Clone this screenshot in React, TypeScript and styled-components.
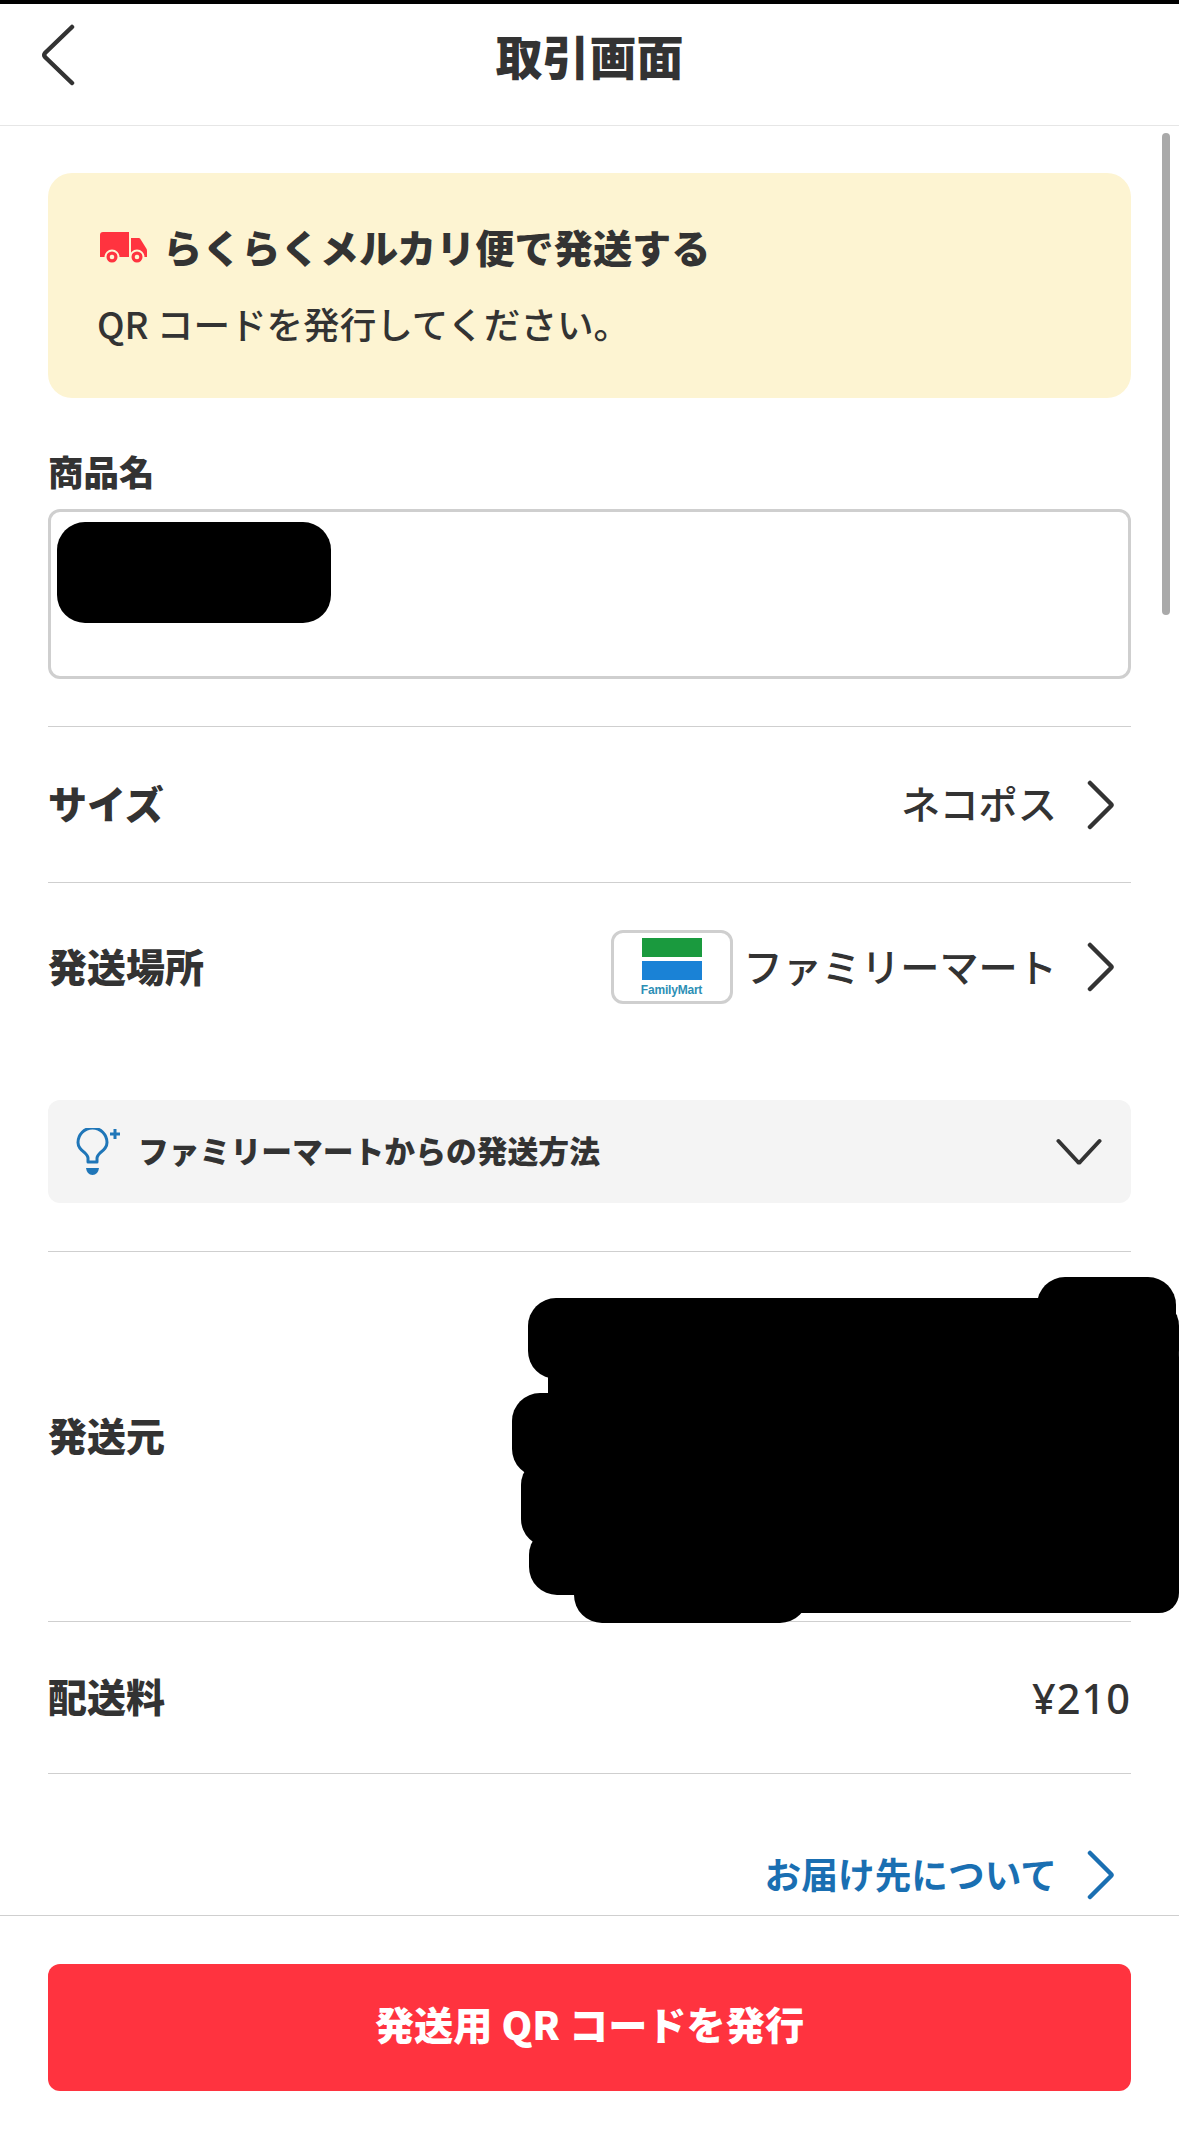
import React from "react";
import styled, { createGlobalStyle } from "styled-components";

const Global = createGlobalStyle`
  html, body { margin: 0; padding: 0; background: #fff; }
  * { box-sizing: border-box; }
  body { font-family: "Noto Sans CJK JP", "Noto Sans", sans-serif; color: #333; }
`;

const Page = styled.div`
  position: relative;
  width: 1179px;
  height: 2132px;
  display: flex;
  flex-direction: column;
  overflow: hidden;
  background: #fff;
  border-top: 4px solid #000;
`;

const Header = styled.header`
  height: 122px;
  flex: none;
  display: grid;
  grid-template-columns: 1fr auto 1fr;
  align-items: center;
  padding: 0 41px 20px 41px;
  border-bottom: 1px solid #e6e6e6;
`;

const Title = styled.h1`
  margin: 0;
  font-size: 47px;
  line-height: 60px;
  font-weight: 900;
  color: #333;
`;

const Body = styled.main`
  flex: 1;
  padding: 47px 48px 0 48px;
  display: flex;
  flex-direction: column;
`;

const Banner = styled.section`
  height: 225px;
  flex: none;
  border-radius: 24px;
  background: #fdf4d2;
  padding: 48px 48px 0 49px;
  display: flex;
  flex-direction: column;
  gap: 28px;
`;

const BannerHead = styled.div`
  display: flex;
  align-items: center;
  gap: 16px;
  height: 50px;
  font-size: 39.2px;
  font-weight: 900;
  line-height: 50px;
`;

const TruckSvg = styled.svg`
  flex: none;
  margin: 4px 0 0 3px;
`;

const BannerText = styled.div`
  font-size: 36.6px;
  line-height: 50px;
  font-weight: 500;
  color: #333;
`;

const FieldLabel = styled.div`
  margin-top: 53px;
  font-size: 35.5px;
  line-height: 40px;
  font-weight: 900;
`;

const NameBox = styled.div`
  margin-top: 18px;
  height: 170px;
  flex: none;
  border: 3px solid #cfcfcf;
  border-radius: 12px;
  padding: 10px 6px;
`;

const NameMask = styled.div`
  width: 274px;
  height: 101px;
  border-radius: 28px;
  background: #000;
`;

const Divider = styled.hr<{ $top?: number }>`
  flex: none;
  width: 100%;
  height: 1px;
  border: 0;
  margin: ${(p) => p.$top ?? 0}px 0 0 0;
  background: #cfcfcf;
`;

const Row = styled.div<{ $height: number }>`
  position: relative;
  height: ${(p) => p.$height}px;
  flex: none;
  display: flex;
  align-items: center;
  justify-content: space-between;
`;

const RowLabel = styled.span`
  font-size: 39px;
  line-height: 50px;
  font-weight: 900;
  padding-bottom: 5px;
`;

const RowValue = styled.span`
  display: flex;
  align-items: center;
`;

const ValueText = styled.span`
  font-size: 39.2px;
  line-height: 50px;
  font-weight: 500;
  padding-bottom: 5px;
`;

const Price = styled.span`
  font-family: "Noto Sans", sans-serif;
  font-size: 41.5px;
  font-weight: 500;
  line-height: 50px;
  letter-spacing: 1px;
`;

const ChevronSlot = styled.span`
  display: flex;
  margin: 0 16px 0 30px;
`;

const LogoBox = styled.span`
  width: 122px;
  height: 74px;
  margin-right: 11px;
  border: 3px solid #cfcfcf;
  border-radius: 12px;
  display: flex;
  flex-direction: column;
  align-items: center;
  padding-top: 5px;
  background: #fff;
`;

const LogoBand = styled.span<{ $color: string; $gap?: number }>`
  width: 60px;
  height: 19px;
  flex: none;
  margin-top: ${(p) => p.$gap ?? 0}px;
  background: ${(p) => p.$color};
`;

const LogoWord = styled.span`
  margin-top: 2px;
  font-family: "Liberation Sans", sans-serif;
  font-size: 12px;
  line-height: 16px;
  font-weight: 700;
  color: #2d8fb5;
  letter-spacing: -0.2px;
`;

const PlaceSection = styled.div`
  height: 368px;
  flex: none;
  display: flex;
  flex-direction: column;
`;

const Accordion = styled.div`
  margin-top: 49px;
  height: 103px;
  flex: none;
  border-radius: 12px;
  background: #f4f4f4;
  display: flex;
  align-items: center;
  padding: 0 29px 0 28px;
`;

const AccordionText = styled.span`
  flex: 1;
  margin-left: 16px;
  font-size: 30.8px;
  line-height: 40px;
  font-weight: 900;
  padding-bottom: 4px;
`;

const LinkRow = styled.div`
  height: 140px;
  flex: none;
  display: flex;
  align-items: center;
  justify-content: flex-end;
  padding-top: 62px;
  color: #1a6fb2;
`;

const LinkText = styled.span`
  font-size: 36.7px;
  font-weight: 700;
  line-height: 50px;
  padding-bottom: 4px;
`;

const Footer = styled.footer`
  height: 217px;
  flex: none;
  border-top: 1px solid #cfcfcf;
  padding: 48px 48px 0 48px;
`;

const PrimaryButton = styled.button`
  width: 100%;
  height: 127px;
  border: 0;
  border-radius: 12px;
  padding: 0 0 9px 0;
  background: #ff333f;
  color: #fff;
  font-family: inherit;
  font-size: 39.2px;
  font-weight: 900;
  display: flex;
  align-items: center;
  justify-content: center;
`;

const ScrollThumb = styled.div`
  position: absolute;
  top: 129px;
  right: 9px;
  width: 8px;
  height: 482px;
  border-radius: 4px;
  background: #a9a9a9;
`;

const AddressMask = styled.svg`
  position: absolute;
  left: 464px;
  top: 25px;
  overflow: visible;
`;

const BackIcon = () => (
  <svg width="34" height="62" viewBox="0 0 34 62" fill="none">
    <path d="M31 3 L4 29 Q2.500 31 4 33 L31 59" stroke="#333" strokeWidth="4.500" strokeLinecap="round" strokeLinejoin="round" />
  </svg>
);

const Chevron = ({ color = "#333" }: { color?: string }) => (
  <svg width="28" height="50" viewBox="0 0 28 50" fill="none">
    <path d="M3 3 L24 24 Q25 25 24 26 L3 47" stroke={color} strokeWidth="4.500" strokeLinecap="round" strokeLinejoin="round" />
  </svg>
);

const ChevronDown = () => (
  <svg width="46" height="28" viewBox="0 0 46 28" fill="none">
    <path d="M2.500 3 L22 24 Q23 25 24 24 L43.500 3" stroke="#333" strokeWidth="4" strokeLinecap="round" strokeLinejoin="round" />
  </svg>
);

const Truck = () => (
  <TruckSvg width="47" height="32" viewBox="0 0 47 32" fill="none">
    <path d="M0 3 Q0 0 3 0 H29 V25 H0 Z" fill="#ff333f" />
    <path d="M31 6 H39 Q40 6 41 8 L46 16 Q47 17 47 19 V25 H31 Z" fill="#ff333f" />
    <circle cx="12" cy="25" r="6.500" fill="#ff333f" stroke="#fdf4d2" strokeWidth="2" />
    <circle cx="12" cy="25" r="2.300" fill="#fdf4d2" />
    <circle cx="37" cy="25" r="6.500" fill="#ff333f" stroke="#fdf4d2" strokeWidth="2" />
    <circle cx="37" cy="25" r="2.300" fill="#fdf4d2" />
  </TruckSvg>
);

const Bulb = () => (
  <svg width="46" height="48" viewBox="0 0 46 48" fill="none">
    <path
      d="M12 34 V30 Q12 28 9 25 Q2 20 2 14.500 A14.500 14.500 0 0 1 31 14.500 Q31 20 24 25 Q21 28 21 30 V34 Z"
      stroke="#1f76b8"
      strokeWidth="3"
      strokeLinejoin="round"
    />
    <path d="M10 40 H23 Q22 47 16.500 47 Q11 47 10 40 Z" fill="#1f76b8" />
    <path d="M39 1 V11 M34 6 H44" stroke="#1f76b8" strokeWidth="3" />
  </svg>
);

export default function App() {
  return (
    <>
      <Global />
      <Page>
        <Header>
          <BackIcon />
          <Title>取引画面</Title>
          <span />
        </Header>
        <Body>
          <Banner>
            <BannerHead>
              <Truck />
              らくらくメルカリ便で発送する
            </BannerHead>
            <BannerText>QR コードを発行してください。</BannerText>
          </Banner>
          <FieldLabel>商品名</FieldLabel>
          <NameBox>
            <NameMask />
          </NameBox>
          <Divider $top={47} />
          <Row $height={155}>
            <RowLabel>サイズ</RowLabel>
            <RowValue>
              <ValueText>ネコポス</ValueText>
              <ChevronSlot>
                <Chevron />
              </ChevronSlot>
            </RowValue>
          </Row>
          <Divider />
          <PlaceSection>
            <Row $height={168}>
              <RowLabel>発送場所</RowLabel>
              <RowValue>
                <LogoBox>
                  <LogoBand $color="#1a9a3e" />
                  <LogoBand $color="#1a82d6" $gap={4} />
                  <LogoWord>FamilyMart</LogoWord>
                </LogoBox>
                <ValueText>ファミリーマート</ValueText>
                <ChevronSlot>
                  <Chevron />
                </ChevronSlot>
              </RowValue>
            </Row>
            <Accordion>
              <Bulb />
              <AccordionText>ファミリーマートからの発送方法</AccordionText>
              <ChevronDown />
            </Accordion>
          </PlaceSection>
          <Divider />
          <Row $height={369}>
            <RowLabel>発送元</RowLabel>
            <AddressMask width="667" height="346" viewBox="0 0 667 346" fill="#000">
              <rect x="16" y="21" width="651" height="81" rx="28" />
              <rect x="525" y="0" width="139" height="80" rx="28" />
              <rect x="0" y="116" width="667" height="84" rx="28" />
              <rect x="9" y="180" width="658" height="90" rx="28" />
              <rect x="17" y="250" width="650" height="68" rx="28" />
              <rect x="36" y="92" width="100" height="34" />
              <rect x="80" y="60" width="587" height="276" rx="20" />
              <rect x="62" y="280" width="234" height="66" rx="28" />
            </AddressMask>
          </Row>
          <Divider />
          <Row $height={151}>
            <RowLabel>配送料</RowLabel>
            <Price>¥210</Price>
          </Row>
          <Divider />
          <LinkRow>
            <LinkText>お届け先について</LinkText>
            <ChevronSlot>
              <Chevron color="#1a6fb2" />
            </ChevronSlot>
          </LinkRow>
        </Body>
        <Footer>
          <PrimaryButton>発送用 QR コードを発行</PrimaryButton>
        </Footer>
        <ScrollThumb />
      </Page>
    </>
  );
}
